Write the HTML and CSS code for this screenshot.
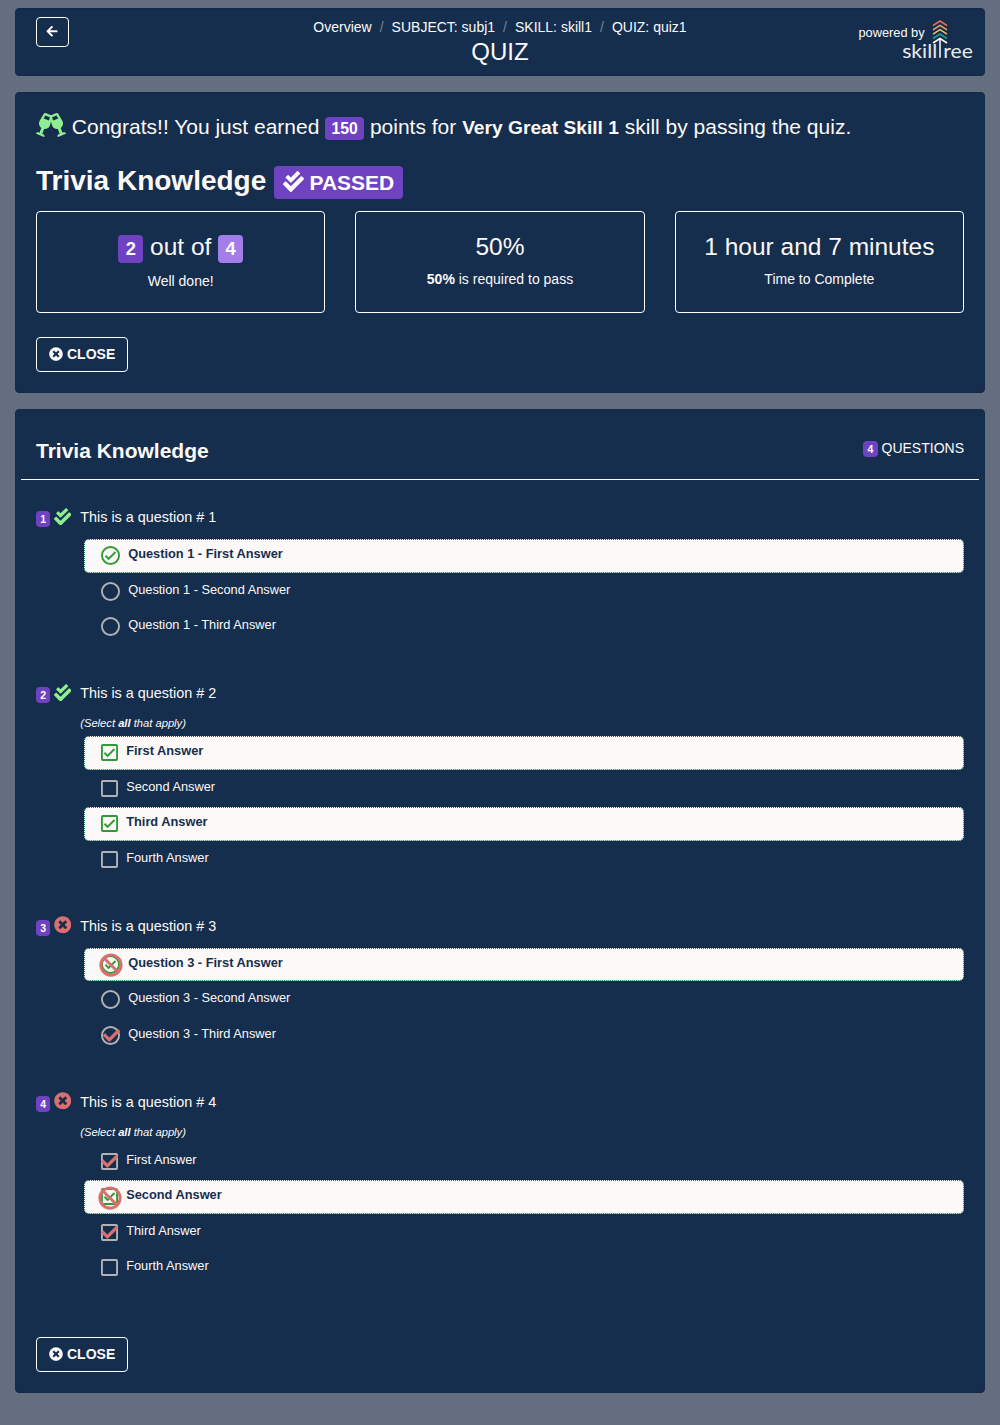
FILE: index.html
```html
<!DOCTYPE html>
<html lang="en">
<head>
<meta charset="utf-8">
<title>Quiz</title>
<link rel="stylesheet" href="styles.css">
</head>
<body>
<svg class="defs" aria-hidden="true">
  <symbol id="arrow-left" viewBox="0 0 448 512"><path d="M257.5 445.1l-22.2 22.2c-9.4 9.4-24.6 9.4-33.9 0L7 273c-9.4-9.4-9.4-24.6 0-33.9L201.4 44.7c9.4-9.4 24.6-9.4 33.9 0l22.2 22.2c9.5 9.5 9.3 25-.4 34.3L136.6 216H424c13.3 0 24 10.7 24 24v32c0 13.3-10.7 24-24 24H136.6l120.5 114.8c9.8 9.3 10 24.8.4 34.3z"/></symbol>
  <symbol id="cheers" viewBox="0 0 640 512"><path d="M639.4 433.6c-8.4-20.4-31.8-30.1-52.2-21.6l-22.1 9.2-38.7-101.9c47.9-35 64.8-100.3 34.5-152.8L474.3 16c-8-13.9-25.1-19.7-40-13.6L320 49.8 205.7 2.4c-14.9-6.1-32-.3-40 13.6L79.1 166.5C48.9 219 65.7 284.3 113.6 319.2L74.9 421.1l-22.1-9.2c-20.4-8.5-43.7 1.2-52.2 21.6-1.7 4.1.2 8.8 4.3 10.5l162.3 67.4c4.1 1.7 8.7-.2 10.4-4.3 8.4-20.4-1.2-43.8-21.6-52.3l-22.1-9.2L173.3 342c4.4.5 8.8 1.3 13.1 1.3 51.7 0 99.4-33.1 113.4-85.3l20.2-75.4 20.2 75.4c14 52.2 61.7 85.3 113.4 85.3 4.3 0 8.7-.8 13.1-1.3L506 445.6l-22.1 9.2c-20.4 8.5-30 31.9-21.6 52.3 1.7 4.1 6.4 6 10.4 4.3L635.1 444c4-1.7 6-6.3 4.3-10.4zM275.9 162.1l-112.1-46.5 36.5-63.4 94.5 39.2-18.9 70.7zm88.2 0l-18.9-70.7 94.5-39.2 36.5 63.4-112.1 46.5z"/></symbol>
  <symbol id="check-double" viewBox="0 0 512 512"><path d="M505 174.8l-39.6-39.6c-9.4-9.4-24.6-9.4-33.9 0L192 374.7 80.6 263.2c-9.4-9.4-24.6-9.4-33.9 0L7 302.9c-9.4 9.4-9.4 24.6 0 34L175 505c9.4 9.4 24.6 9.4 33.9 0l296-296.2c9.4-9.5 9.4-24.7.1-34zm-324.3 106c6.2 6.3 16.4 6.3 22.6 0l208-208.2c6.2-6.3 6.2-16.4 0-22.6L366.1 4.7c-6.2-6.3-16.4-6.3-22.6 0L192 156.2l-55.4-55.5c-6.2-6.3-16.4-6.3-22.6 0L68.7 146c-6.2 6.3-6.2 16.4 0 22.6l112 112.2z"/></symbol>
  <symbol id="times-circle" viewBox="0 0 512 512"><path d="M256 8C119 8 8 119 8 256s111 248 248 248 248-111 248-248S393 8 256 8zm121.6 313.1c4.7 4.7 4.7 12.3 0 17L338 377.6c-4.7 4.7-12.3 4.7-17 0L256 312l-65.1 65.6c-4.7 4.7-12.3 4.7-17 0L134.4 338c-4.7-4.7-4.7-12.3 0-17l65.6-65-65.6-65.1c-4.7-4.7-4.7-12.3 0-17l39.6-39.6c4.7-4.7 12.3-4.7 17 0l65 65.7 65.1-65.6c4.7-4.7 12.3-4.7 17 0l39.6 39.6c4.7 4.7 4.7 12.3 0 17L312 256l65.6 65.1z"/></symbol>
  <symbol id="ban" viewBox="0 0 512 512"><path d="M256 8C119.034 8 8 119.033 8 256s111.034 248 248 248 248-111.034 248-248S392.967 8 256 8zm130.108 117.892c65.448 65.448 70 165.481 20.677 235.637L150.47 105.216c70.204-49.356 170.226-44.735 235.638 20.676zM125.892 386.108c-65.448-65.448-70-165.481-20.677-235.637L361.53 406.784c-70.203 49.356-170.226 44.736-235.638-20.676z"/></symbol>
  <symbol id="check" viewBox="0 0 512 512"><path d="M173.898 439.404l-166.4-166.4c-9.997-9.997-9.997-26.206 0-36.204l36.203-36.204c9.997-9.998 26.207-9.998 36.204 0L192 312.69 432.095 72.596c9.997-9.997 26.207-9.997 36.204 0l36.203 36.204c9.997 9.997 9.997 26.206 0 36.204l-294.4 294.401c-9.998 9.997-26.207 9.997-36.204-.001z"/></symbol>
  <symbol id="radio" viewBox="2 2 20 20"><circle cx="12" cy="12" r="9" fill="none" stroke="currentColor" stroke-width="2"/></symbol>
  <symbol id="radio-on" viewBox="2 2 20 20"><circle cx="12" cy="12" r="9" fill="none" stroke="currentColor" stroke-width="2"/><path d="M16.59 7.58L10 14.17l-2.59-2.58L6 13l4 4 8-8z"/></symbol>
  <symbol id="box" viewBox="3 3 18 18"><rect x="4" y="4" width="16" height="16" rx="1" fill="none" stroke="currentColor" stroke-width="2"/></symbol>
  <symbol id="box-on" viewBox="3 3 18 18"><rect x="4" y="4" width="16" height="16" rx="1" fill="none" stroke="currentColor" stroke-width="2"/><path d="M16.59 7.58L10 14.17l-2.59-2.58L6 13l4 4 8-8z"/></symbol>
</svg>

<header class="card top">
  <div class="top-left"><button class="back" aria-label="Back"><svg><use href="#arrow-left"/></svg></button></div>
  <div class="top-mid">
    <nav class="crumbs"><span>Overview</span><i>/</i><span>SUBJECT: subj1</span><i>/</i><span>SKILL: skill1</span><i>/</i><span>QUIZ: quiz1</span></nav>
    <h1>QUIZ</h1>
  </div>
  <div class="brand">
    <span class="powered">powered by</span>
    <svg class="logo" viewBox="0 0 72 48">
      <g fill="none" stroke-width="1.5">
        <path stroke="#e76f51" d="M32 7.500L39 3L46 7.500"/>
        <path stroke="#f4a261" d="M32 11.800L39 7.300L46 11.800"/>
        <path stroke="#e9c46a" d="M32 16.100L39 11.600L46 16.100"/>
        <path stroke="#2a9d8f" d="M32 20.500L39 16L46 20.500"/>
        <path stroke="#fff" d="M32 25L39 20.500L46 25M39 20.500V39.700"/>
      </g>
      <text x="1.200" y="39.700" textLength="35" lengthAdjust="spacingAndGlyphs">skill</text>
      <text x="42.300" y="39.700" textLength="29.500" lengthAdjust="spacingAndGlyphs">ree</text>
    </svg>
  </div>
</header>

<section class="card result">
  <p class="congrats"><svg class="cheers"><use href="#cheers"/></svg> Congrats!! You just earned <span class="badge">150</span> points for <b>Very Great Skill 1</b> skill by passing the quiz.</p>
  <h2>Trivia Knowledge <span class="badge passed"><svg><use href="#check-double"/></svg>PASSED</span></h2>
  <div class="stats">
    <div class="stat"><div class="big"><span class="badge">2</span> out of <span class="badge light">4</span></div><div class="sub low">Well done!</div></div>
    <div class="stat"><div class="big">50%</div><div class="sub"><b>50%</b> is required to pass</div></div>
    <div class="stat"><div class="big">1 hour and 7 minutes</div><div class="sub">Time to Complete</div></div>
  </div>
  <button class="close"><svg><use href="#times-circle"/></svg>CLOSE</button>
</section>

<section class="card quiz">
  <div class="quiz-head"><h3>Trivia Knowledge</h3><div class="count"><span class="num">4</span> QUESTIONS</div></div>

  <article class="question">
    <div class="q-head"><span class="num">1</span><svg class="mark ok"><use href="#check-double"/></svg><span class="q-text">This is a question # 1</span></div>
    <div class="answer right"><span class="pick radio"><svg><use href="#radio-on"/></svg></span><span>Question 1 - First Answer</span></div>
    <div class="answer"><span class="pick radio"><svg><use href="#radio"/></svg></span><span>Question 1 - Second Answer</span></div>
    <div class="answer"><span class="pick radio"><svg><use href="#radio"/></svg></span><span>Question 1 - Third Answer</span></div>
  </article>

  <article class="question">
    <div class="q-head"><span class="num">2</span><svg class="mark ok"><use href="#check-double"/></svg><span class="q-text">This is a question # 2</span></div>
    <div class="hint">(Select <b>all</b> that apply)</div>
    <div class="answer right"><span class="pick"><svg><use href="#box-on"/></svg></span><span>First Answer</span></div>
    <div class="answer"><span class="pick"><svg><use href="#box"/></svg></span><span>Second Answer</span></div>
    <div class="answer right"><span class="pick"><svg><use href="#box-on"/></svg></span><span>Third Answer</span></div>
    <div class="answer"><span class="pick"><svg><use href="#box"/></svg></span><span>Fourth Answer</span></div>
  </article>

  <article class="question">
    <div class="q-head"><span class="num">3</span><svg class="mark bad"><use href="#times-circle"/></svg><span class="q-text">This is a question # 3</span></div>
    <div class="answer right"><span class="pick radio"><svg><use href="#radio-on"/></svg><svg class="missed"><use href="#ban"/></svg></span><span>Question 3 - First Answer</span></div>
    <div class="answer"><span class="pick radio"><svg><use href="#radio"/></svg></span><span>Question 3 - Second Answer</span></div>
    <div class="answer"><span class="pick radio"><svg><use href="#radio"/></svg><svg class="wrong"><use href="#check"/></svg></span><span>Question 3 - Third Answer</span></div>
  </article>

  <article class="question">
    <div class="q-head"><span class="num">4</span><svg class="mark bad"><use href="#times-circle"/></svg><span class="q-text">This is a question # 4</span></div>
    <div class="hint">(Select <b>all</b> that apply)</div>
    <div class="answer"><span class="pick"><svg><use href="#box"/></svg><svg class="wrong"><use href="#check"/></svg></span><span>First Answer</span></div>
    <div class="answer right"><span class="pick"><svg><use href="#box-on"/></svg><svg class="missed"><use href="#ban"/></svg></span><span>Second Answer</span></div>
    <div class="answer"><span class="pick"><svg><use href="#box"/></svg><svg class="wrong"><use href="#check"/></svg></span><span>Third Answer</span></div>
    <div class="answer"><span class="pick"><svg><use href="#box"/></svg></span><span>Fourth Answer</span></div>
  </article>

  <button class="close"><svg><use href="#times-circle"/></svg>CLOSE</button>
</section>
</body>
</html>
```
FILE: styles.css
```css
* { box-sizing: border-box; }
body {
  margin: 0;
  padding: 8px 15px 32px;
  min-height: 1425px;
  display: flex;
  flex-direction: column;
  gap: 16px;
  background: #646e7e;
  color: #fdf9f8;
  font: 14px/21px "Liberation Sans", Arial, sans-serif;
}
h1, h2, h3, p { margin: 0; }
svg { fill: currentColor; }
.defs { position: absolute; width: 0; height: 0; }
.card {
  background: #152e4d;
  border: 1px solid #14294a;
  border-radius: 4px;
}
button {
  background: transparent;
  color: inherit;
  border: 1px solid #fff;
  border-radius: 4px;
  font: bold 14px/21px "Liberation Sans", Arial, sans-serif;
}

/* header */
.top { height: 68px; display: grid; grid-template-columns: 1fr auto 1fr; }
.top-left { padding: 8px 0 0 20px; }
.back { display: flex; align-items: center; justify-content: center; width: 33px; height: 30px; padding: 0 0 1px; }
.back svg { width: 12px; height: 12.500px; margin-right: 1px; }
.top-mid { text-align: center; padding-top: 8px; }
.crumbs { display: flex; gap: 8px; }
.crumbs i { font-style: normal; color: #77828f; }
h1 { font-size: 24px; font-weight: normal; line-height: 27px; }
.brand { display: flex; justify-content: flex-end; padding: 9px 11px 0 0; }
.powered { font-size: 12.800px; line-height: 20px; padding-top: 5px; margin-right: -23.600px; }
.logo { width: 72px; height: 48px; overflow: visible; }
.logo text { font: 400 20px Lato, sans-serif; fill: #e9ecf0; }

/* result */
.result { height: 301px; padding: 20px 20px 0; }
.congrats { font-size: 21px; line-height: 28px; white-space: nowrap; height: 54px; }
.congrats b { font-size: 19.200px; }
.cheers { width: 30px; height: 24px; vertical-align: -3px; color: #90ee90; }
.badge {
  display: inline-block;
  background: #6f42c1;
  color: #fff;
  font-weight: bold;
  font-size: 15.750px;
  line-height: 16px;
  padding: 4px 6.300px 3px;
  border-radius: 4px;
  vertical-align: baseline;
}
h2 { font-size: 28px; line-height: 34px; height: 44px; margin-top: -3px; margin-bottom: 3px; white-space: nowrap; }
.passed { font-size: 21px; line-height: 21px; padding: 5px 8.400px 6px; }
.passed svg { width: 21px; height: 21px; margin: 0 5px 0 1px; vertical-align: -2px; }
.stats { display: grid; grid-template-columns: repeat(3, 1fr); gap: 30px; }
.stat { height: 102px; border: 1px solid #fff; border-radius: 4px; text-align: center; padding-top: 20px; }
.big { font-size: 24.500px; line-height: 30px; height: 37px; }
.big .badge { font-size: 18.375px; line-height: 18px; padding: 5px 7.350px; }
.badge.light { background: #a37ee8; }
.sub.low { padding-top: 2px; }
.close { display: flex; align-items: center; gap: 4px; width: 92px; height: 35px; padding: 0 0 0 12px; margin-top: 24px; }
.close svg { width: 14px; height: 14px; margin-bottom: 1.500px; }

/* questions */
.quiz { height: 984px; padding: 0 20px; }
.quiz-head {
  display: flex;
  justify-content: space-between;
  height: 70px;
  margin: 0 -15px 20px;
  padding: 28px 15px 0;
  border-bottom: 1px solid #fdf9f8;
}
h3 { font-size: 21px; line-height: 25px; }
.num {
  display: inline-block;
  background: #6f42c1;
  color: #fff;
  font-weight: bold;
  font-size: 10.500px;
  line-height: 11px;
  padding: 3px 4.200px 2px;
  border-radius: 4px;
}
.question { padding-bottom: 32.200px; }
.q-head { display: flex; align-items: flex-start; height: 38px; }
.q-head .num { margin-top: 11px; }
.mark { width: 17.500px; height: 17.500px; margin: 7.600px 9px 0 3.500px; }
.ok { color: #90ee90; }
.bad { color: #d9706f; }
.q-text { font-size: 14.400px; line-height: 22px; padding-top: 6px; }
.hint { font-size: 11.200px; font-style: italic; line-height: 17px; height: 21px; padding-top: 1px; margin-left: 44.200px; }
.answer {
  display: flex;
  height: 33.600px;
  margin: 1px 0 2px 48px;
  padding-left: 16px;
  border: 1px solid transparent;
  border-radius: 5px;
  font-size: 12.800px;
  line-height: 19px;
  gap: 8.200px;
  padding-top: 4px;
}
.answer + .answer { margin-top: 0; }
.answer:last-child { margin-bottom: 0; }
.answer.right { background: #fdf9f8; color: #152e4d; border: 1px dotted #007c49; font-weight: bold; }
.pick { position: relative; width: 17px; height: 17px; margin-top: 3px; color: #b2b2b2; }
.pick svg { display: block; width: 100%; height: 100%; }
.radio { width: 19px; height: 19px; margin-top: 2px; }
.right .pick { color: #2f9b35; }
.pick .missed { position: absolute; width: 24px; height: 24px; left: -3.500px; top: -2px; color: #d9706f; }
.pick .wrong { position: absolute; width: 17px; height: 17px; left: .4px; top: .8px; color: #d9706f; }
.radio .missed { left: -2.400px; top: -1.400px; }
.radio .wrong { left: 1.600px; top: 1.500px; }
.question + .close { margin-top: 20px; }
```
